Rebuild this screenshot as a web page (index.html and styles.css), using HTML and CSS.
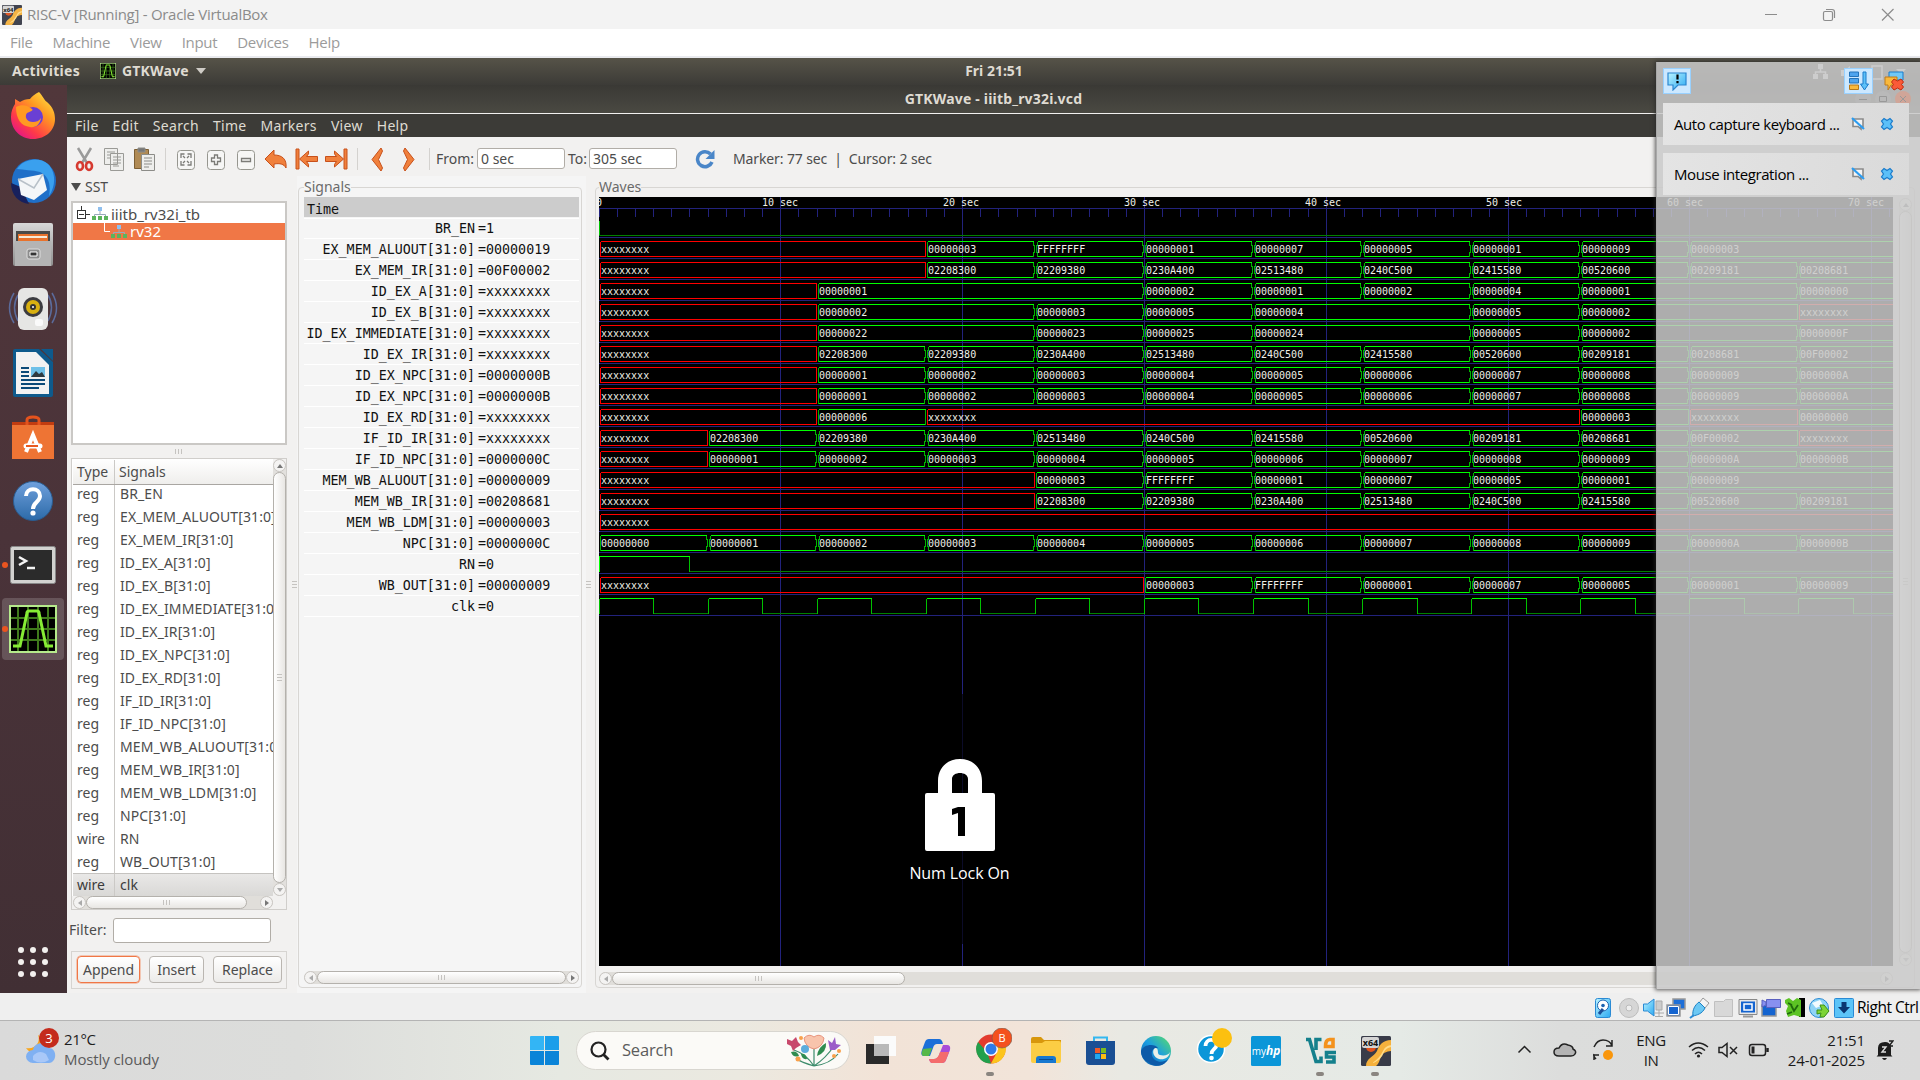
FILE: index.html
```html
<!DOCTYPE html>
<html lang="en">
<head>
<meta charset="utf-8">
<title>RISC-V [Running] - Oracle VirtualBox</title>
<link rel="stylesheet" href="styles.css">
</head>
<body>
<svg class="defs" width="0" height="0" aria-hidden="true">
  <defs>
    <linearGradient id="ffx" x1="1" y1="0" x2="0.2" y2="1"><stop offset="0" stop-color="#fff14a"/><stop offset=".4" stop-color="#ff9a22"/><stop offset=".75" stop-color="#ff3a48"/><stop offset="1" stop-color="#e0138c"/></linearGradient>
    <linearGradient id="gray" x1="0" y1="0" x2="0" y2="1"><stop offset="0" stop-color="#d8d8d8"/><stop offset="1" stop-color="#8f8f8f"/></linearGradient>
    <linearGradient id="help" x1="0" y1="0" x2="0" y2="1"><stop offset="0" stop-color="#6fa0dc"/><stop offset="1" stop-color="#2c6aa8"/></linearGradient>
    <linearGradient id="sky" x1="0" y1="0" x2="1" y2="1"><stop offset="0" stop-color="#b9f3ff"/><stop offset="1" stop-color="#2ba9f2"/></linearGradient>
    <linearGradient id="edge" x1="0" y1="1" x2="1" y2="0"><stop offset="0" stop-color="#0c59a4"/><stop offset=".5" stop-color="#1b9de2"/><stop offset="1" stop-color="#5be065"/></linearGradient>
    <symbol id="gtkwave" viewBox="0 0 48 48"><path fill="#b6ea8c" d="M0 0h48v48H0z"/><path fill="#000" d="M2 2h44v44H2z"/><path stroke="#3f7a1c" stroke-width="2" d="M9 2v44M19 2v44M29 2v44M39 2v44M2 13h44M2 24h44M2 35h44"/><path fill="none" stroke="#86ec34" stroke-width="3" d="M4 41h7L18 8q0-2 2-2h8q2 0 2 2l7 33h7"/></symbol>
    <symbol id="x64" viewBox="0 0 30 30"><rect width="30" height="30" rx="1.500" fill="#383b48"/><path fill="#f5b13d" d="M30 4v11q-3 0-7 2c-5 3-3 9-8 13H5c0-8 8-9 11-15C18 9 22 4 30 4z"/><path fill="#ffdc8a" d="M30 5v4q-6 1-8 6-4 8-11 12 9-2 12-11 2-4 7-5z"/><circle cx="10" cy="11" r="5" fill="#e0511c"/><rect x="1" y="1" width="17" height="11" rx="2" fill="#d4d4d4"/><text x="9.500" y="10" font-size="9" font-weight="700" text-anchor="middle" fill="#111">x64</text></symbol>
    <symbol id="hier" viewBox="0 0 16 14"><path stroke="#9ab" fill="none" d="M8 4v4M2.500 10V7.500h11V10"/><path fill="#8fbfee" d="M6 0h4v4H6z"/><path fill="#5cb45c" d="M0 9h4v4H0zM6 9h4v4H6zM12 9h4v4h-4z"/></symbol>
    <symbol id="mutebubble" viewBox="0 0 14 14"><path fill="#f4f4f4" stroke="#8a8a8a" stroke-width="1.600" d="M2 2h10v7.500h-2V12L7 9.500H2z"/><path stroke="#2b9cf0" stroke-width="2.200" d="M1 1l12 11"/></symbol>
    <symbol id="bluex" viewBox="0 0 14 14"><path fill="#5cc0f8" stroke="#1b7ccc" stroke-width="1.200" d="M4 1.500l3 2 3-2 2.500 2.500-2 3 2 3L10 12.500l-3-2-3 2L1.500 10l2-3-2-3z"/></symbol>
  </defs>
</svg>

<header class="host-title">
  <svg class="host-logo" width="20" height="20"><use href="#x64"/></svg>
  <span class="host-name">RISC-V [Running] - Oracle VirtualBox</span>
  <svg class="host-ctrl" width="130" height="20" viewBox="0 0 130 20" fill="none" stroke="#8c8c8c" stroke-width="1.200"><path d="M1 9.500h12M118 4l11.500 11.500M129.500 4L118 15.500"/><rect x="59.500" y="6.500" width="9" height="9" rx="1.500"/><path d="M62 4.500h6q2.500 0 2.500 2.500v6"/></svg>
</header>
<nav class="host-menu"><span>File</span><span>Machine</span><span>View</span><span>Input</span><span>Devices</span><span>Help</span></nav>

<main class="guest">
  <div class="topbar">
    <span class="activities">Activities</span>
    <svg width="16" height="16"><use href="#gtkwave"/></svg>
    <span class="appname">GTKWave</span>
    <svg width="10" height="6"><path fill="#cfccc6" d="M0 0h10L5 6z"/></svg>
    <span class="clock">Fri 21:51</span>
  </div>
  <div class="desk">
    <aside class="dock">
      <div class="item first"><svg width="46" height="48" viewBox="0 0 46 48"><path fill="url(#ffx)" d="M29 1c4 4 5 8 8 10 6 5 8 11 8 17 0 11-9 20-22 20S1 38 1 26c0-6 2-10 4-13v-5l5 3c3-2 6-3 10-3 2-3 5-5 9-7z"/><circle cx="23" cy="26" r="10" fill="#6a3fd4"/><path fill="#ff9a22" d="M6 16c5-3 12-2 16 2 2 1-2 3-5 4-3 4 0 9 6 9 3 0 6-1 8-4-1 7-6 10-11 9C11 35 6 28 6 16z"/></svg></div>
      <div class="item"><svg width="48" height="48" viewBox="0 0 48 48"><circle cx="25" cy="24" r="22" fill="#1f6fc8"/><path fill="#17205c" d="M2 26c0 12 8 20 18 21L12 30z"/><path fill="#3aa0ee" d="M8 12C14 2 30-1 39 7c8 8 8 22 1 32 2-11 0-20-9-24-8-2-16-2-23-3z"/><path fill="#f4f6f8" d="M9 22l25-5 4 16-13 10L12 38z"/><path fill="none" stroke="#b8c0c8" stroke-width="1.500" d="M9 22l16 9 9-14"/></svg></div>
      <div class="item"><svg width="42" height="44" viewBox="0 0 42 44"><rect x="1" width="40" height="43" rx="2" fill="url(#gray)"/><path fill="#4a4a48" d="M4 8h34v12H4z"/><path fill="#e8722c" d="M6 11h30v8H6z"/><path fill="#f5ead8" d="M7 13h28v2H7z"/><path fill="#b4b4b4" d="M3 18h36v25H3z"/><rect x="15" y="26" width="13" height="10" rx="2" fill="#8c8c8c" stroke="#ddd"/><path fill="#333" stroke="#fff" d="M18 29h7v4h-7z"/></svg></div>
      <div class="item"><svg width="50" height="44" viewBox="0 0 50 44"><g fill="none" stroke="#5b6b9b" stroke-width="1.500"><path d="M6 6q-9 15 0 30M44 6q9 15 0 30M10 8q-7 12 0 26M40 8q7 12 0 26"/></g><rect x="10" y="1" width="30" height="42" rx="6" fill="#e6e6e4"/><circle cx="25" cy="20" r="10" fill="#3c3c40"/><circle cx="25" cy="20" r="7" fill="#d8b010"/><circle cx="25" cy="20" r="3" fill="#333"/><circle cx="25" cy="20" r="1" fill="#fff"/><rect x="27" y="32" width="8" height="7" rx="2" fill="#fafafa"/></svg></div>
      <div class="item"><svg width="40" height="48" viewBox="0 0 40 48"><path fill="#0e5a8c" d="M2 0h24l14 13v33q0 2-2 2H2q-2 0-2-2V2q0-2 2-2z"/><path fill="#f2f2f2" d="M3 3h20l13 13v29H3z"/><path fill="#0e5a8c" d="M28 0h12v12z"/><path stroke="#0b4a78" stroke-width="2" d="M8 19h8M8 23h8M8 27h8M8 31h24M8 35h24M8 39h18"/><path fill="#6fc0e8" d="M18 18h14v10H18z"/><path fill="#2f3a40" d="M18 28l5-6 3 3 3-2 3 5z"/></svg></div>
      <div class="item"><svg width="42" height="44" viewBox="0 0 42 44"><path fill="#c23c10" d="M0 7h42v6H0z"/><path fill="none" stroke="#e4531d" stroke-width="3" d="M15 14V5q0-3 6-3t6 3v9"/><path fill="#ee7434" d="M0 10h42v34H0z"/><path fill="none" stroke="#fff" stroke-width="4" d="M14 37l7-17 7 17"/><path stroke="#fff" stroke-width="5" stroke-linecap="round" d="M14 31h14"/><path stroke="#e85a20" stroke-width="2" d="M14 31h12"/></svg></div>
      <div class="item"><svg width="40" height="42" viewBox="0 0 40 42"><circle cx="20" cy="21" r="19.500" fill="url(#help)" stroke="#2a5c90"/><path fill="none" stroke="#fff" stroke-width="4" d="M13 16c0-9 14-9 14 0 0 6-7 6-7 13"/><circle cx="20" cy="33" r="2.600" fill="#fff"/></svg></div>
      <div class="item running"><svg width="46" height="38" viewBox="0 0 46 38"><rect x=".5" y=".5" width="45" height="37" rx="2" fill="#d2d2d0" stroke="#888"/><path fill="#2b2b2b" d="M4 4h38v30H4z"/><path fill="none" stroke="#f4f4f4" stroke-width="2.500" d="M9 11l7 4-7 4M17 22h8"/></svg></div>
      <div class="item running focused"><svg width="48" height="48"><use href="#gtkwave"/></svg></div>
      <div class="apps"><i></i><i></i><i></i><i></i><i></i><i></i><i></i><i></i><i></i></div>
    </aside>

    <section class="app">
      <div class="app-title">GTKWave - iiitb_rv32i.vcd</div>
      <nav class="app-menu"><span>File</span><span>Edit</span><span>Search</span><span>Time</span><span>Markers</span><span>View</span><span>Help</span></nav>
      <div class="toolbar">
        <svg class="tools" width="370" height="28" viewBox="0 0 370 28">
          <g transform="translate(1 0)"><path fill="none" stroke="#9a9a9a" stroke-width="2.500" d="M5 3l9 15M18 3L9 18"/><g fill="none" stroke="#d63a30" stroke-width="2.600"><ellipse cx="7" cy="21" rx="3" ry="4"/><ellipse cx="16" cy="21" rx="3" ry="4"/></g></g>
          <g fill="#eeeeec" stroke="#9a9a96"><path d="M32.500 3.500h13v16h-13zM38.500 8.500h13v17h-13z"/><path d="M35 7h8M35 10h3M35 13h3M41 12h8M41 15h8M41 18h8M41 21h6"/></g>
          <g stroke="#8c8c88"><path fill="#b08a54" stroke="#7d5f34" d="M62.500 4.500h14v19h-14z"/><path fill="#777" d="M66 3h7v4h-7z"/><path fill="#eeeeec" d="M69.500 9.500h13v16h-13z"/><path d="M72 13h8M72 16h8M72 19h8M72 22h5"/></g>
          <path stroke="#d4d2cf" d="M93.500 3v22M285.500 3v22M357.500 3v22"/>
          <g fill="#f6f6f5" stroke="#96968f"><rect x="105.500" y="5.500" width="17" height="19" rx="3"/><rect x="135.500" y="5.500" width="17" height="19" rx="3"/><rect x="165.500" y="5.500" width="17" height="19" rx="3"/></g>
          <g fill="none" stroke="#7c7c78" stroke-width="1.300"><path d="M109 13V9h3.500M115.500 9h3.500v4M109 16v4h3.500M115.500 20h3.500v-4M111 11l2 2M117 11l-2 2M111 18l2-2M117 18l-2-2"/><path d="M142.500 10h3v3h3v3.500h-3v3h-3v-3h-3V13h3zM169.500 13.500h9v3h-9z"/></g>
          <g fill="#f0803c" stroke="#c8501a"><path d="M193 14l9-9v5c8 0 13 4 12 13-2-4-6-5-12-4v4z"/><path d="M224 4h3v20h-3zM227.500 14l9-8q1 3-2 5.500h11v5h-11q3 3 2 5.500zM272 4h3v20h-3zM271.500 14l-9-8q-1 3 2 5.500h-11v5h11q-3 3-2 5.500z"/><path d="M309 3l-9 11.500L309 26l1.500-3-4-8.500 4-8.500zM333 3l9 11.500L333 26l-1.500-3 4-8.500-4-8.500z"/></g>
        </svg>
        <label class="tl">From:</label><div class="entry">0 sec</div>
        <label class="tl to">To:</label><div class="entry">305 sec</div>
        <svg class="reload" width="20" height="20" viewBox="0 0 20 20"><path fill="none" stroke="#4a86c8" stroke-width="3.500" d="M15.500 5A7.500 7.500 0 1 0 17 13"/><path fill="#4a86c8" d="M19.500 1v9h-9z"/></svg>
        <span class="marker">Marker: 77 sec&nbsp; |&nbsp; Cursor: 2 sec</span>
      </div>

      <div class="panes">
        <div class="left">
          <div class="sst"><svg width="10" height="8"><path fill="#4c4c4c" d="M0 0h10L5 8z"/></svg>SST</div>
          <div class="tree">
            <div class="trow"><svg width="14" height="17" viewBox="0 0 14 17" fill="none" stroke="#333"><path d="M4.500 0v4M9 8.500h4M2 8.500h5"/><rect x=".5" y="4.500" width="8" height="8"/></svg><svg width="16" height="14"><use href="#hier"/></svg><span>iiitb_rv32i_tb</span></div>
            <div class="trow sel"><svg width="10" height="17" viewBox="0 0 10 17" fill="none" stroke="#fff"><path d="M4.500 0v8.500H10"/></svg><svg width="16" height="14"><use href="#hier"/></svg><span>rv32</span></div>
          </div>
          <div class="grip"></div>
          <div class="siglist">
            <div class="list">
              <div class="lhead"><span class="ty">Type</span><span class="nm">Signals</span></div>
              <div class="lbody" id="list"></div>
            </div>
            <div class="vscroll"><i class="up"></i><b></b><i class="down"></i></div>
            <div class="hscroll small"><i class="lt"></i><b></b><i class="rt"></i></div>
          </div>
          <div class="filter"><label>Filter:</label><div class="box"></div></div>
          <div class="buttons"><div class="btn focus">Append</div><div class="btn ins">Insert</div><div class="btn rep">Replace</div></div>
        </div>

        <div class="signals">
          <fieldset><legend>Signals</legend>
            <div class="names" id="names"><div class="time">Time</div></div>
            <div class="hscroll mid"><i class="lt"></i><b></b><i class="rt"></i></div>
          </fieldset>
        </div>

        <div class="waves">
          <fieldset><legend>Waves</legend>
            <div class="wavegrid">
              <svg id="wave" class="wave" width="1294" height="769" shape-rendering="crispEdges"></svg>
              <div class="vscroll tall"><i class="up"></i><b></b><i class="down"></i></div>
              <div class="hscroll wide"><i class="lt"></i><b></b><i class="rt"></i></div>
            </div>
          </fieldset>
        </div>
      </div>
    </section>
  </div>

  <div class="osd">
    <svg width="70" height="93" viewBox="0 0 70 93"><path fill="#fff" fill-rule="evenodd" d="M13 34V22C13 8 23 0 35 0s22 8 22 22v12h11q2 0 2 2v54q0 2-2 2H2q-2 0-2-2V36q0-2 2-2zM27 34h16V20c0-8-16-8-16 0z"/><path fill="#000" d="M33 48h7v29h-7V54l-6 2v-6z"/></svg>
    <span>Num Lock On</span>
  </div>

  <aside class="notes">
    <div class="ghost">
      <svg width="110" height="50" viewBox="0 0 110 50"><g fill="#cdcdcd"><path d="M7 2h5v5H7zM2 12h5v5H2zM12 12h5v5h-5z"/><path d="M30 8h4l5-4v14l-5-4h-4zM85 7h10l-5 5z"/></g><path fill="none" stroke="#cdcdcd" stroke-width="1.500" d="M9.500 7v3M4.500 12v-2h10v2M61 4h10v13H61z"/><circle cx="52" cy="37" r="8" fill="#b9b9b9"/><circle cx="72" cy="37" r="8" fill="#b9b9b9"/><circle cx="92" cy="37" r="8" fill="#d0a598"/><path stroke="#999" fill="none" d="M48 37.500h8M68.500 34.500h7v5h-7zM89 34l6 6M95 34l-6 6"/></svg>
    </div>
    <div class="nhead">
      <div class="nbtn"><svg width="20" height="20" viewBox="0 0 20 20"><path fill="url(#sky)" stroke="#2c86d0" stroke-width="1.200" d="M1 2h18v12h-8l-5 5v-5H1z"/><path stroke="#000" stroke-width="2.200" d="M10.500 3.500v5M10.500 10v2.200"/></svg></div>
      <div class="nbtn push"><svg width="20" height="20" viewBox="0 0 20 20"><path fill="#4ea4ee" stroke="#2473b8" d="M.5 1h9v4.500h-9zM.5 7.500h9V12h-9z"/><path fill="#f9b93c" stroke="#b87818" d="M.5 14h9v4.500h-9z"/><path fill="#5cc0f8" stroke="#1b7ccc" d="M14 1h3v12h2.500l-4 6-4-6H14z"/></svg></div>
      <div class="nbtn plain"><svg width="20" height="20" viewBox="0 0 20 20"><path fill="#70c8f8" stroke="#1b7ccc" d="M5 1h14v8H5z"/><path fill="#f9b93c" stroke="#c07a18" d="M1 6h12v8H7l-3 5v-5H1z"/><path fill="#fa5a38" stroke="#c02c10" d="M10 8l3.500 2L17 8l2.500 3-2 2.500 2 2.500-2.500 3-3.500-2-3.500 2-2.500-3 2-2.500-2-2.500z"/></svg></div>
    </div>
    <div class="note"><span>Auto capture keyboard ...</span><svg width="14" height="14"><use href="#mutebubble"/></svg><svg width="14" height="14"><use href="#bluex"/></svg></div>
    <div class="note second"><span>Mouse integration ...</span><svg width="14" height="14"><use href="#mutebubble"/></svg><svg width="14" height="14"><use href="#bluex"/></svg></div>
  </aside>
</main>

<footer class="status">
  <svg width="260" height="22" viewBox="0 0 260 22">
    <rect x="1.500" y="1.500" width="15" height="19" rx="2" fill="url(#sky)" stroke="#2a8ad4"/><circle cx="9" cy="8.500" r="5.500" fill="#fff" stroke="#1c62b0"/><circle cx="9" cy="8.500" r="1.800" fill="#1c62b0"/><path stroke="#1c4f98" stroke-width="3" d="M9 12l-4 5"/>
    <circle cx="35" cy="11" r="9.500" fill="#d6d6d6" stroke="#bdbdbd"/><circle cx="35" cy="11" r="3" fill="#eee" stroke="#bbb"/>
    <path fill="url(#sky)" stroke="#2a8ad4" d="M49.500 7h4L60 2v17l-6.500-5h-4z"/><path fill="#ccc" stroke="#aaa" d="M62 4h6v9h-6zM60 16h10M65 13v6M61 19.500h8"/>
    <path fill="#1d6fd8" stroke="#999" stroke-width="1.500" d="M79 2h12v10H79z"/><path fill="#1464d0" stroke="#999" stroke-width="1.500" d="M73 8h13v11H73z"/><path stroke="#fff" fill="none" d="M74.500 9.500h10v8h-10z"/>
    <path fill="#f4f4f4" stroke="#999" d="M109 1l6 5-4 5-6-5z"/><path fill="#6cc8f4" stroke="#1a80c4" d="M105 5l6 6c-3 6-8 7-12 8-1-6 2-11 6-14z"/><path stroke="#2a8ad4" stroke-width="2" d="M100 18l-4 3"/>
    <path fill="#d8d8d8" stroke="#c0c0c0" d="M120.500 4.500h9l2-2h7v17h-18z"/>
    <path fill="#e8e8e8" stroke="#888" d="M145 2.500h18v15h-18z"/><path fill="#1464d0" d="M147 4.500h14v11h-14z"/><path fill="#1464d0" stroke="#fff" stroke-width="1.500" d="M150 7h8v6h-8z"/><path stroke="#999" stroke-width="2" d="M149 19.500h10"/>
    <path fill="#1464d0" stroke="#999" stroke-width="1.500" d="M168 8h14v11h-14z"/><path fill="#8890f0" stroke="#5a60c0" d="M172.500 2.500h14v8h-14zM168 3l4 2v3l-4 2z"/>
    <path d="M205 1h6v19h-6z"/><path fill="#5cc424" d="M191 3l4-2 4 3 4-3 4 2v17l-7-2-6 2-2-6 2-5-3-3z"/><path fill="none" stroke="#1f6a0c" stroke-width="1.800" d="M194 6l4 2M193 17l5-2M197 8l3 6 4-6"/>
    <circle cx="225" cy="11" r="9.500" fill="#8fd4f6" stroke="#2a8ad4"/><path fill="#f2fbff" d="M218 6l8-3 3 5-7 3z"/><path fill="#7ed436" stroke="#3c9014" d="M223 13h5l-2-5h4l5 6-5 6h-4l1-4-4 1z"/>
    <rect x="240.500" y="1.500" width="19" height="19" rx="1" fill="#5cc4f8" stroke="#2a8ad4"/><path fill="#0a3470" d="M247.500 5h5v5h3.500l-6 6.500-6-6.500h3.500z"/>
  </svg>
  <span>Right Ctrl</span>
</footer>

<footer class="taskbar">
  <div class="weather">
    <svg width="36" height="42" viewBox="0 0 36 42"><path fill="#f8a51c" d="M13 8c3 7-3 15-12 13 2 3 5 5 9 5 8-1 12-13 3-18z"/><path fill="#7fb0f2" d="M8 36a7 6.500 0 0 1 0-13c1-8 13-9 15-2 9-1 10 14 1 15z"/><path fill="#a9c8f8" d="M8 29q6-7 13-2l3 6q-8 5-16 0z"/><circle cx="24" cy="11" r="10" fill="#c42b1c"/><text x="24" y="16" font-size="13" text-anchor="middle" fill="#fff">3</text></svg>
    <div><span>21°C</span><span class="dim">Mostly cloudy</span></div>
  </div>
  <div class="center">
    <svg class="start" width="29" height="29" viewBox="0 0 29 29"><path fill="#33b5f5" d="M0 1q0-1 1-1h13v14H0z"/><path fill="#1a9eea" d="M15 0h13q1 0 1 1v13H15z"/><path fill="#0a84d8" d="M0 15h14v14H1q-1 0-1-1zM15 15h14v13q0 1-1 1H15z"/></svg>
    <div class="search">
      <svg width="20" height="20" viewBox="0 0 20 20" fill="none" stroke="#222" stroke-width="2.200"><circle cx="8.500" cy="8.500" r="7"/><path stroke-width="2.800" d="M13.500 13.500l5 5"/></svg>
      <span>Search</span>
      <svg width="56" height="34" viewBox="0 0 56 34"><g fill="none" stroke="#3c8c6c" stroke-width="1.200"><path d="M28 32V12M28 32Q20 20 8 16M28 32Q40 24 48 12M28 32Q14 28 10 24M28 32Q44 30 52 20"/></g><path fill="#f8c4ac" stroke="#e8937c" d="M18 4q5-5 10-1 5-4 10 1-1 9-10 11Q19 13 18 4z"/><path fill="#c8486c" d="M1 5l5 2 4-4 2 5 3 3-5 3-3 3-2-5-4-2z"/><path fill="#9c5cc8" d="M42 6l4 3 3-6 1 7 5 1-6 5h-5z"/><circle cx="19" cy="15" r="4" fill="#5cacdc"/><path fill="#2f8c50" d="M31 22q1-9 9-13 1 9-9 13zM5 18q6-2 8 4-6 2-8-4zM15 20q5-1 6 5-5 1-6-5z"/><g fill="#f8a04c"><circle cx="12" cy="25" r="2.500"/><circle cx="53" cy="17" r="2"/><circle cx="15" cy="4" r="2"/><circle cx="48" cy="22" r="2"/></g></svg>
    </div>
    <div class="pins">
      <div class="pin"><svg width="30" height="30" viewBox="0 0 30 30"><path fill="#2a2a2a" d="M0 8h23v20H0z"/><path fill="#fbfbfb" d="M8 0h22v20H8z"/><path fill="#b9b9b9" d="M8 8h15v12H8z"/></svg></div>
      <div class="pin"><svg width="30" height="26" viewBox="0 0 30 26"><path fill="#1c6fd8" d="M8 1h10q3 0 4 5h-6q-3 0-4 4l-3 8H3q-4 0-2-6l3-8q1-3 4-3z"/><path fill="#56b848" d="M2 11l9-1-3 8H3q-4 0-1-7z"/><path fill="#a84cd8" d="M22 7h4q4 0 3 5l-4 10q-1 3-4 3H11q-2 0-3-4h5q4 0 5-4z"/><path fill="#f46c6c" d="M19 14h9l-3 8q-1 3-4 3H11q-2 0-3-4h5q4 0 6-7z"/></svg></div>
      <div class="pin on"><svg width="36" height="38" viewBox="0 0 36 38"><circle cx="15" cy="21" r="14.500" fill="#e33b2e"/><path fill="#22a04c" d="M2 14l9 10 4 11.500A14.500 14.500 0 0 1 2 14z"/><path fill="#fcc41c" d="M15 35.500l7-13-2-8.500h8A14.500 14.500 0 0 1 15 35.500z"/><circle cx="15" cy="21" r="7" fill="#fff"/><circle cx="15" cy="21" r="5.500" fill="#2f7be8"/><circle cx="26" cy="10" r="10" fill="#f4511e" stroke="#6d5a50" stroke-width=".6"/><text x="26" y="14" font-size="11" text-anchor="middle" fill="#fff">B</text></svg></div>
      <div class="pin"><svg width="30" height="28" viewBox="0 0 30 28"><path fill="#d8970c" d="M0 2q0-2 2-2h8l3 3H30v5H0z"/><path fill="#fccd44" d="M0 6h11l3-2h14q2 0 2 2v18q0 2-2 2H2q-2 0-2-2z"/><path fill="#1778d0" d="M5 26v-4q0-3 3-3h14q3 0 3 3v4z"/><path stroke="#0c4c90" d="M8 22.500h14"/></svg></div>
      <div class="pin"><svg width="29" height="30" viewBox="0 0 29 30"><path fill="none" stroke="#34b8f0" stroke-width="2" d="M8 6V1.500h13V6"/><path fill="#1a4f94" d="M0 5h29v21q0 3-3 3H3q-3 0-3-3z"/><path fill="#f05a28" d="M9 12h5v5H9z"/><path fill="#7cbb20" d="M15 12h5v5h-5z"/><path fill="#20a8f0" d="M9 18h5v5H9z"/><path fill="#fcbc14" d="M15 18h5v5h-5z"/></svg></div>
      <div class="pin"><svg width="30" height="30" viewBox="0 0 30 30"><circle cx="15" cy="15" r="15" fill="url(#edge)"/><path fill="#0d5aa8" d="M0 15C2 8 14 7 17 12c-6-1-9 7-3 12 4 3 10 2 13-1-4 9-16 8-20 3C3 24 0 20 0 15z"/><path fill="#e9efe9" d="M14 12c5 0 1 6 5 7 4 1 9 0 10-3-1 6-6 8-11 7-5-1-8-8-4-11z"/></svg></div>
      <div class="pin"><svg width="36" height="38" viewBox="0 0 36 38"><circle cx="15" cy="21" r="13.500" fill="#0b96d8" stroke="#fff" stroke-width="1.500"/><path fill="none" stroke="#fff" stroke-width="3.800" d="M9.500 18c0-8 11-8 11-1 0 4-5 4-5 9"/><circle cx="15.500" cy="30" r="2.300" fill="#fff"/><circle cx="26" cy="10" r="10" fill="#fcc010"/></svg></div>
      <div class="pin"><svg width="30" height="30" viewBox="0 0 30 30"><rect width="30" height="30" rx="1.500" fill="#0b96d8"/><text x="15" y="19" font-size="10" text-anchor="middle" fill="#fff">my<tspan font-style="italic" font-weight="700" font-size="12">hp</tspan></text></svg></div>
      <div class="pin on"><svg width="30" height="28" viewBox="0 0 30 28"><g fill="none" stroke-width="3.600"><path stroke="#14808c" d="M0 2.500h3.500l6.500 22h5v-5M10 13V2.500h5.500M30 15.500h-9.500v4.500h7.500v5h-8"/><path stroke="#f4921c" d="M19.500 9.500q0-7 4-7h3.500v7z"/></g></svg></div>
      <div class="pin on"><svg width="30" height="30"><use href="#x64"/></svg></div>
    </div>
  </div>
  <div class="tray">
    <svg class="t1" width="98" height="30" viewBox="0 0 98 30" fill="none" stroke="#222" stroke-width="1.500"><path d="M1.500 17.500l6-6 6 6"/><path fill="#b4b4b4" d="M42 21q-5 0-5-4t5-4q3-6 9-3 5 1 5 4 4 2 2 5-1 2-4 2z"/><path d="M77 12q3-7 9-7 7 0 9 6M95 5v6h-6M79 24q-3-3-2-5M77 25v-5h5"/><circle cx="91" cy="20" r="5" fill="#f9960c" stroke="none"/></svg>
    <div class="lang"><span>ENG</span><span>IN</span></div>
    <svg class="t2" width="82" height="24" viewBox="0 0 82 24" fill="none" stroke="#222" stroke-width="1.500"><path d="M1 9q9-8 19 0M4 12.500q6.500-6 13 0M7 16q3.500-3.500 7 0"/><circle cx="10.500" cy="18" r="1.600" fill="#222" stroke="none"/><path d="M31 9.500h3l5-4v13l-5-4h-3zM42 9l7 7M49 9l-7 7"/><rect x="61.500" y="6.500" width="16" height="11" rx="2.500"/><path stroke-width="2.500" d="M79.500 10v4"/><path fill="#222" stroke="none" d="M63.500 8.500h3v7h-3z"/></svg>
    <div class="dt"><span>21:51</span><span>24-01-2025</span></div>
    <svg class="bell" width="18" height="20" viewBox="0 0 18 20"><path fill="#1c1c1c" d="M2 15V8q0-6 7-6 5 0 6 5v8l1.500 1.500H.5zM6 18h5q-1 2-2.500 2T6 18z"/><path fill="none" stroke="#dcdcdc" stroke-width="1.400" d="M6 7h4l-4 5h4"/><path fill="none" stroke="#1c1c1c" stroke-width="1.400" d="M13 1h4l-4 5h4"/></svg>
  </div>
</footer>
<script src="waves.js"></script>
</body>
</html>
```

FILE: styles.css
```css
* { box-sizing: border-box; }
body {
  margin: 0; width: 1920px; height: 1080px; overflow: hidden;
  display: flex; flex-direction: column;
  font-family: "Open Sans", "Noto Sans", sans-serif; font-size: 14px; line-height: 1; white-space: nowrap;
  background: #efefef;
}
svg { flex: none; display: block; }
.defs { position: absolute; }

/* host window */
.host-title { height: 29px; background: #f3f3f3; display: flex; align-items: center; padding: 0 26px 0 2px; flex: none; }
.host-name { margin-left: 5px; padding-bottom: 1px; color: #8b8b8b; font-size: 15px; letter-spacing: -.28px; }
.host-ctrl { margin-left: auto; }
.host-logo { opacity: .95; }
.host-menu { height: 29px; background: #fff; border-bottom: 2px solid #e9eaee; display: flex; gap: 20px; align-items: center; padding-left: 10px; color: #9b9b9b; font-size: 15px; letter-spacing: -.3px; flex: none; }

/* guest */
.guest { height: 935px; position: relative; display: flex; flex-direction: column; flex: none; font-family: "Noto Sans", sans-serif; }
.topbar { height: 27px; background: linear-gradient(#565348, #3c3b37); color: #dfdbd2; display: flex; align-items: center; padding: 0 0 1px 12px; font-weight: 700; font-size: 14px; position: relative; letter-spacing: .3px; }
.activities { width: 88px; }
.appname { margin: 0 6px 0 6px; width: 68px; letter-spacing: .2px; }
.clock { position: absolute; left: 68px; right: 0; text-align: center; letter-spacing: 0; }
.desk { flex: 1; display: flex; min-height: 0; }
.dock { width: 67px; background: linear-gradient(#51373b, #4a3339 50%, #412f34); display: flex; flex-direction: column; align-items: center; flex: none; }
.item { height: 64px; width: 67px; padding-right: 1px; display: flex; align-items: center; justify-content: center; position: relative; }
.item.first { padding-bottom: 4px; }
.running::before { content: ""; position: absolute; left: 2px; top: 29px; width: 6px; height: 6px; border-radius: 50%; background: #e95420; z-index: 1; }
.focused::after { content: ""; position: absolute; left: 2px; top: 1px; width: 62px; height: 62px; border-radius: 4px; background: rgba(255,255,255,.17); }
.focused svg { position: relative; z-index: 1; }
.apps { margin: auto 1px 16px 0; display: grid; grid-template-columns: repeat(3, 6px); gap: 6px; }
.apps i { width: 6px; height: 6px; border-radius: 50%; background: #f2f0ee; }

.app { flex: 1; display: flex; flex-direction: column; min-width: 0; color: #4c4c4c; background: #f2f1f0; }
.app-title { height: 29px; background: linear-gradient(#3a3935, #4a4942); color: #dfdbd2; font-weight: 700; font-size: 14px; line-height: 28px; text-align: center; border-bottom: 1px solid #f2f1f0; letter-spacing: .18px; }
.app-menu { height: 23px; background: #3c3b37; color: #dfdbd2; display: flex; align-items: center; gap: 14px; padding-left: 8px; font-size: 14px; letter-spacing: .3px; }
.toolbar { height: 39px; display: flex; align-items: center; padding: 4px 0 0 5px; flex: none; font-size: 14px; }
.tl { margin: 0 2px 0 -6px; width: 39px; }
.tl.to { margin: 0 2px 0 3px; width: 19px; }
.entry { width: 88px; height: 21px; border: 1px solid #b1ada7; border-radius: 3px; background: #fff; padding-left: 3px; line-height: 19px; }
.reload { margin-left: 18px; }
.marker { margin-left: 18px; letter-spacing: -.12px; }

.panes { flex: 1; display: flex; min-height: 0; }
.left { width: 230px; display: flex; flex-direction: column; padding-left: 4px; font-size: 14px; }
.sst { height: 25px; display: flex; align-items: center; gap: 4px; padding-bottom: 3px; }
.tree { width: 216px; height: 244px; background: #fff; border: 2px solid #cac8c5; padding-top: 3px; }
.trow { height: 17px; display: flex; align-items: center; padding-left: 4px; gap: 2px; font-size: 15px; letter-spacing: 0; padding-bottom: 1px; }
.trow span { margin-left: 1px; }
.trow svg:nth-child(2) { margin-left: -1px; }
.trow.sel { background: #f07746; color: #fff; padding: 0 0 0 27px; }
.grip { width: 216px; height: 13px; background: repeating-linear-gradient(90deg, #c5c3c0 0 1px, transparent 1px 3px) center / 8px 5px no-repeat; }
.siglist { width: 216px; height: 452px; border: 1px solid #d0cecb; display: grid; grid-template-columns: 201px 13px; grid-template-rows: 437px 13px; background: #f2f1f0; }
.list { background: #fff; overflow: hidden; height: 437px; padding-left: 1px; }
.lhead { height: 26px; display: flex; align-items: center; background: linear-gradient(#fff, #efeeec); border-bottom: 1px solid #a9a6a2; font-size: 14px; padding-top: 1px; }
.ty { width: 42px; height: 100%; flex: none; border-right: 1px solid #cbc9c6; padding-left: 4px; display: flex; align-items: center; }
.lhead .nm { padding-left: 4px; }
.nm { padding-left: 5px; }
.lrow { height: 22.950px; display: flex; align-items: center; }
.lrow .nm { letter-spacing: .1px; }
.lbody .lrow:first-child { height: 21px; padding-bottom: 3px; }
.lrow:first-child .ty { height: 21px; margin-bottom: -3px; padding-bottom: 3px; }
.lrow:last-child { background: linear-gradient(#e9e8e7, #d9d8d6); border-top: 1px solid #c5c3c0; color: #3c3c3c; }
.vscroll { width: 13px; display: flex; flex-direction: column; background: #e2e0dd; border-radius: 7px; }
.vscroll b { flex: 1; border: 1px solid #b4b1ac; border-radius: 7px; background: repeating-linear-gradient(#c5c3c0 0 1px, transparent 1px 3px) center / 5px 8px no-repeat, linear-gradient(90deg, #fff, #e8e6e3); }
.vscroll i, .hscroll i { flex: none; width: 13px; height: 13px; border: 1px solid #c9c6c2; border-radius: 7px; background: #f4f3f2; display: flex; align-items: center; justify-content: center; }
.vscroll i::after, .hscroll i::after { content: ""; border: 3px solid transparent; }
.vscroll .up::after { border-bottom: 4px solid #777; border-top: 0; }
.vscroll .down::after { border-top: 4px solid #aaa; border-bottom: 0; }
.hscroll .lt::after { border-right: 4px solid #aaa; border-left: 0; }
.hscroll .rt::after { border-left: 4px solid #777; border-right: 0; }
.hscroll { height: 13px; display: flex; background: #e0deda; border-radius: 7px; }
.hscroll b { border: 1px solid #b4b1ac; border-radius: 7px; background: repeating-linear-gradient(90deg, #c5c3c0 0 1px, transparent 1px 3px) center / 8px 5px no-repeat, linear-gradient(#fff, #e8e6e3); }
.hscroll .rt { margin-left: auto; }
.small b { width: 161px; }
.small { margin-left: 1px; }
.mid b { width: 249px; }
.wide b { width: 293px; }
.filter { display: flex; align-items: center; height: 41px; padding-bottom: 1px; }
.filter label { width: 44px; margin-left: -2px; letter-spacing: .1px; }
.box { width: 158px; height: 25px; border: 1px solid #b1ada7; border-radius: 3px; background: #fff; }
.buttons { width: 216px; height: 38px; border: 1px solid #d6d4d1; display: flex; align-items: center; padding: 0 0 1px 5px; gap: 9px; }
.btn { width: 63px; height: 27px; border: 1px solid #bab6b1; border-radius: 4px; background: linear-gradient(#fff, #ecebe9); text-align: center; line-height: 25px; letter-spacing: -.05px; }
.btn.focus { border: 1px solid #f07746; box-shadow: 0 0 0 .5px #f29b77; }
.btn.ins { width: 55px; }
.btn.rep { width: 69px; }

fieldset { margin: 0; border: 1px solid #d8d6d3; border-radius: 4px; padding: 0 4px 3px 5px; min-width: 0; height: 810px; display: flex; flex-direction: column; }
legend { padding: 0; font-size: 14px; line-height: 18px; height: 18px; color: #6a6a6a; }
.signals { width: 289px; background: #f5f5f5; padding: 2px 4px 0 1px; position: relative; }
.signals::before, .signals::after { content: ""; position: absolute; top: 405px; width: 5px; height: 8px; background: repeating-linear-gradient(#c5c3c0 0 1px, transparent 1px 3px); }
.signals::before { left: -5px; }
.signals::after { right: -5px; }
.names { width: 275px; font-family: "DejaVu Sans Mono", monospace; font-size: 13.330px; color: #111; margin-top: 1px; }
.time { height: 20px; background: #ccc; padding-left: 3px; line-height: 25px; margin-bottom: 1px; }
.srow { height: 21px; display: flex; line-height: 22px; border-top: 1px solid #fff; }
.srow:nth-child(2) { line-height: 20px; height: 20px; }
.srow span { width: 171px; text-align: right; margin-right: 3px; flex: none; }
.srow:last-child { border-bottom: 1px solid #fff; height: 22px; }
.mid { width: 275px; margin-top: auto; }
.waves { flex: 1; padding: 2px 0 0 9px; min-width: 0; }
.waves fieldset { width: 1320px; padding-left: 3px; }
.wavegrid { display: grid; grid-template-columns: 1294px 13px; grid-template-rows: 769px 13px; column-gap: 6px; row-gap: 6px; margin-top: 1px; }
.wave { background: #000; font-family: "DejaVu Sans Mono", monospace; font-size: 10px; fill: #f0f0e8; overflow: hidden; }
.tall { margin-top: 1px; }

/* Windows key indicator */
.osd { position: absolute; left: 864px; top: 636px; width: 192px; height: 250px; background: rgba(0,0,0,.68); display: flex; flex-direction: column; align-items: center; padding: 65px 1px 0 0; gap: 10px; color: #fff; font: 16px "Open Sans", sans-serif; letter-spacing: -.1px; }

/* VirtualBox notification centre */
.notes { position: absolute; left: 1656px; top: 4px; right: 0; height: 927px; background: rgba(201,201,201,.86); box-shadow: 0 0 4px 1px rgba(40,40,40,.75), inset 1px 0 0 #a8a8a8; display: flex; flex-direction: column; padding-left: 7px; font-family: "Open Sans", sans-serif; }
.ghost { position: absolute; left: 155px; top: 0; }
.nhead { height: 41px; display: flex; align-items: center; padding-bottom: 3px; }
.nbtn { width: 28px; height: 26px; background: #cce8ff; border: 1px solid #99d1ff; display: flex; align-items: center; justify-content: center; position: relative; }
.push { margin-left: 153px; width: 29px; }
.plain { background: none; border: 0; margin-left: 7px; }
.note { width: 246px; height: 42px; background: linear-gradient(100deg, #e4e4e4, #dadada); display: flex; align-items: center; padding: 0 15px 0 11px; color: #000; font-size: 15px; letter-spacing: -.42px; position: relative; }
.note span { flex: 1; }
.note svg + svg { margin-left: 15px; }
.note.second { margin-top: 8px; }

.status { height: 27px; background: #efefef; display: flex; align-items: center; padding: 3px 2px 0 0; justify-content: flex-end; gap: 4px; font-size: 15.500px; flex: none; color: #000; }
.status span { width: 61px; letter-spacing: -.5px; margin-left: -1px; padding-bottom: 1px; }

/* Windows taskbar */
.taskbar { height: 60px; border-top: 1px solid #b4b4b4; display: flex; position: relative; flex: none; background: linear-gradient(90deg, #dadada 0, #dcdddb 300px, #e6e9e2 560px, #ebe9e0 740px, #f2e3d7 880px, #f2e4d9 1030px, #e9e9e3 1120px, #e5eae6 1400px, #dcdddc 1560px, #dadada 1920px); }
.weather { width: 530px; display: flex; padding: 6px 0 0 25px; gap: 3px; font-size: 15px; }
.weather div { display: flex; flex-direction: column; gap: 5px; padding-top: 5px; color: #1e1e1e; letter-spacing: -.35px; }
.weather .dim { color: #5a5a5a; letter-spacing: -.1px; }
.center { display: flex; align-items: center; }
.search { width: 274px; height: 39px; border-radius: 20px; background: #fbfaf7; border: 1px solid #d8d6d0; margin-left: 17px; display: flex; align-items: center; padding: 0 7px 0 13px; font-size: 16.500px; color: #5c5c5c; }
.search span { margin-left: 12px; flex: 1; letter-spacing: -.2px; }
.pins { display: flex; margin-left: 3px; }
.pin { width: 55px; height: 58px; display: flex; align-items: center; justify-content: center; position: relative; }
.pin svg[height="38"] { margin: -8px 0 0 6px; }
.pin.on::after { content: ""; position: absolute; left: 23px; bottom: 4px; width: 8px; height: 4px; border-radius: 2px; background: #8a8580; }
.tray { margin-left: auto; display: flex; align-items: center; padding: 0 26px 1px 0; color: #1a1a1a; font-size: 15px; }
.tray div { display: flex; flex-direction: column; gap: 5px; letter-spacing: -.4px; }
.lang { width: 30px; align-items: center; margin: 0 22px 0 21px; }
.tray .dt { align-items: flex-end; margin-left: 15px; width: 80px; letter-spacing: -.1px; }
.bell { margin-left: 11px; }
```

FILE: waves.js
```js
const X = 'xxxxxxxx';
const hex = n => n.toString(16).toUpperCase().padStart(8, '0');
const count = (from, first) => {
  const out = [];
  for (let k = from; k < 12; k++) out.push([k, hex(first + k - from)]);
  return out;
};
const prog = ['02208300', '02209380', '0230A400', '02513480', '0240C500', '02415580', '00520600', '00209181', '00208681', '00F00002', X];
const fetched = from => [[0, X], ...prog.slice(0, 12 - from).map((v, i) => [from + i, v])];
const vals = (...pairs) => pairs.map(([k, v]) => [k, typeof v === 'number' ? hex(v) : v]);

/* name, value at marker, changes as [clock cycle, value] */
const signals = [
  ['BR_EN', '1', 'low'],
  ['EX_MEM_ALUOUT[31:0]', '00000019', vals([0, X], [3, 3], [4, 'FFFFFFFF'], [5, 1], [6, 7], [7, 5], [8, 1], [9, 9], [10, 3])],
  ['EX_MEM_IR[31:0]', '00F00002', fetched(3)],
  ['ID_EX_A[31:0]', X, vals([0, X], [2, 1], [5, 2], [6, 1], [7, 2], [8, 4], [9, 1], [11, 0])],
  ['ID_EX_B[31:0]', X, vals([0, X], [2, 2], [4, 3], [5, 5], [6, 4], [8, 5], [9, 2], [11, X])],
  ['ID_EX_IMMEDIATE[31:0]', X, vals([0, X], [2, 0x22], [4, 0x23], [5, 0x25], [6, 0x24], [8, 5], [9, 2], [11, 15])],
  ['ID_EX_IR[31:0]', X, fetched(2)],
  ['ID_EX_NPC[31:0]', '0000000B', [[0, X], ...count(2, 1)]],
  ['ID_EX_NPC[31:0]', '0000000B', [[0, X], ...count(2, 1)]],
  ['ID_EX_RD[31:0]', X, vals([0, X], [2, 6], [3, X], [9, 3], [10, X], [11, 0])],
  ['IF_ID_IR[31:0]', X, fetched(1)],
  ['IF_ID_NPC[31:0]', '0000000C', [[0, X], ...count(1, 1)]],
  ['MEM_WB_ALUOUT[31:0]', '00000009', vals([0, X], [4, 3], [5, 'FFFFFFFF'], [6, 1], [7, 7], [8, 5], [9, 1], [10, 9])],
  ['MEM_WB_IR[31:0]', '00208681', fetched(4)],
  ['MEM_WB_LDM[31:0]', '00000003', [[0, X]]],
  ['NPC[31:0]', '0000000C', count(0, 0)],
  ['RN', '0', 'reset'],
  ['WB_OUT[31:0]', '00000009', vals([0, X], [5, 3], [6, 'FFFFFFFF'], [7, 1], [8, 7], [9, 5], [10, 1], [11, 9])],
  ['clk', '0', 'clock']
];

document.getElementById('names').insertAdjacentHTML('beforeend',
  signals.map(([n, v]) => `<div class="srow"><span>${n}</span>=${v}</div>`).join(''));

document.getElementById('list').innerHTML = signals.filter((s, i) => i !== 8)
  .map(([n]) => `<div class="lrow"><span class="ty">${n === 'RN' || n === 'clk' ? 'wire' : 'reg'}</span><span class="nm">${n}</span></div>`).join('');

const W = 1294, SEC = 18.18;
const at = t => Math.floor(t * SEC) + 0.5;
const line = (d, c) => `<path fill="none" stroke="${c}" d="${d}"/>`;
let s = '';

let grid = `M0 11.500H${W}`;
for (let t = 0; t <= 71; t++) grid += `M${at(t)} 11V20`;
for (let t = 10; t <= 70; t += 10) grid += `M${at(t)} 0V769`;
signals.forEach((_, i) => { grid += `M0 ${40.5 + 21 * i}H${W}`; });
s += line(grid, '#22227c');
for (let t = 0; t <= 70; t += 10)
  s += `<text x="${t * 18.1}" y="8.500" text-anchor="middle">${t ? t + ' sec' : '0'}</text>`;

signals.forEach(([, , data], i) => {
  const hi = 23.5 + 21 * i, lo = hi + 15;
  if (data === 'low') {
    s += line(`M.5 ${hi}V${lo}`, '#00c000') + line(`M0 ${lo}H${W}`, '#008000');
  } else if (data === 'reset') {
    s += line(`M.5 ${lo}V${hi}H${at(5)}`, '#00ff00') + line(`M${at(5)} ${hi}V${lo}`, '#00c000') + line(`M${at(5)} ${lo}H${W}`, '#008000');
  } else if (data === 'clock') {
    for (let k = 0; k < 12; k++) {
      const a = at(6 * k), b = at(6 * k + 3), c = Math.min(at(6 * k + 6), W);
      s += line(`M${a} ${hi}H${b}`, '#00ff00') + line(`M${a} ${hi}V${lo}M${b} ${hi}V${lo}`, '#00c000') + line(`M${b} ${lo}H${c}`, '#008000');
    }
  } else {
    data.forEach(([k, v], j) => {
      const a = at(6 * k), b = j + 1 < data.length ? at(6 * data[j + 1][0]) : W + 3;
      const bad = v === X, c = bad ? '#ff0000' : '#00ff00', e = bad ? '#ff0000' : '#00b400';
      const prevBad = j > 0 && data[j - 1][1] === X, nextBad = j + 1 < data.length && data[j + 1][1] === X;
      const box0 = bad || prevBad || j === 0, box1 = bad || nextBad;
      const l = box0 ? a + 1 : a + 2, r = box1 ? b - 1 : b - 2;
      s += line(`M${l} ${hi}H${r}M${l} ${lo}H${r}`, c);
      s += line(box0 ? `M${l} ${hi}V${lo}` : `M${l} ${hi}V${hi + 3}L${a + 1} ${hi + 5}V${lo - 5}L${l} ${lo - 3}V${lo}`, e);
      s += line(box1 ? `M${r} ${hi}V${lo}` : `M${r} ${hi}V${hi + 3}L${b - 1} ${hi + 5}V${lo - 5}L${r} ${lo - 3}V${lo}`, e);
      s += `<text x="${a + 1.5}" y="${lo - 3.5}">${v}</text>`;
    });
  }
});
document.getElementById('wave').innerHTML = s;
```
